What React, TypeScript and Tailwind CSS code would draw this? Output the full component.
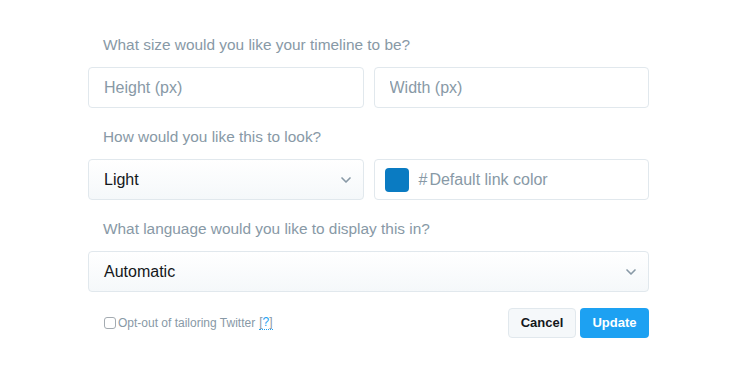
import { ChevronDown } from "lucide-react";

const font = { fontFamily: '"Liberation Sans", Arial, sans-serif' };

function Label({ children }: { children: React.ReactNode }) {
  return <p className="mb-3 h-5 pl-[15px] text-[15.4px] leading-5 text-[#8899a6]">{children}</p>;
}

function TextBox({ placeholder }: { placeholder: string }) {
  return (
    <input
      placeholder={placeholder}
      className="h-[41px] w-full rounded border border-[#e1e8ed] bg-white px-[15px] text-[16px] text-[#14171a] outline-none placeholder:text-[#8899a6]"
    />
  );
}

function SelectBox({ value }: { value: string }) {
  return (
    <div className="flex h-[41px] w-full items-center justify-between rounded border border-[#e1e8ed] bg-gradient-to-b from-white to-[#f5f8fa] pl-[15px] pr-[9px]">
      <span className="text-[16px] text-[#14171a]">{value}</span>
      <ChevronDown size={16} strokeWidth={2.5} className="text-[#8899a6]" />
    </div>
  );
}

export default function App() {
  return (
    <div className="h-[387px] w-[745px] bg-white" style={font}>
      <div className="ml-[88px] w-[561px] pt-[35px]">
        <Label>What size would you like your timeline to be?</Label>
        <div className="grid grid-cols-2 gap-[10px]">
          <TextBox placeholder="Height (px)" />
          <TextBox placeholder="Width (px)" />
        </div>

        <div className="mt-[19px]">
          <Label>How would you like this to look?</Label>
          <div className="grid grid-cols-2 gap-[10px]">
            <SelectBox value="Light" />
            <div className="flex h-[41px] items-center rounded border border-[#e1e8ed] bg-white pl-[10px]">
              <span className="h-6 w-6 rounded-[4px] bg-[#0a7bc2]" />
              <span className="ml-[10px] text-[16px] text-[#8899a6]">#</span>
              <span className="ml-[2px] text-[16px] text-[#8899a6]">Default link color</span>
            </div>
          </div>
        </div>

        <div className="mt-[19px]">
          <Label>What language would you like to display this in?</Label>
          <SelectBox value="Automatic" />
        </div>

        <div className="mt-[16px] flex items-center justify-between">
          <label className="ml-[16px] flex items-center gap-[2px] text-[12px] text-[#8899a6]">
            <span className="h-[12px] w-[12px] rounded-[3px] border border-[#a4abb1] bg-white" />
            Opt-out of tailoring Twitter{" "}
            <span className="ml-[2px] border-b border-dotted border-[#1da1f2] leading-[13px]">
              [<span className="text-[#1da1f2]">?</span>]
            </span>
          </label>
          <div className="flex gap-[4px]">
            <button className="h-[30px] w-[68px] rounded border border-[#e1e8ed] bg-[#f5f8fa] text-[13px] font-bold text-[#14171a]">
              Cancel
            </button>
            <button className="h-[30px] w-[69px] rounded bg-[#1da1f2] text-[13px] font-bold text-white">
              Update
            </button>
          </div>
        </div>
      </div>
    </div>
  );
}
